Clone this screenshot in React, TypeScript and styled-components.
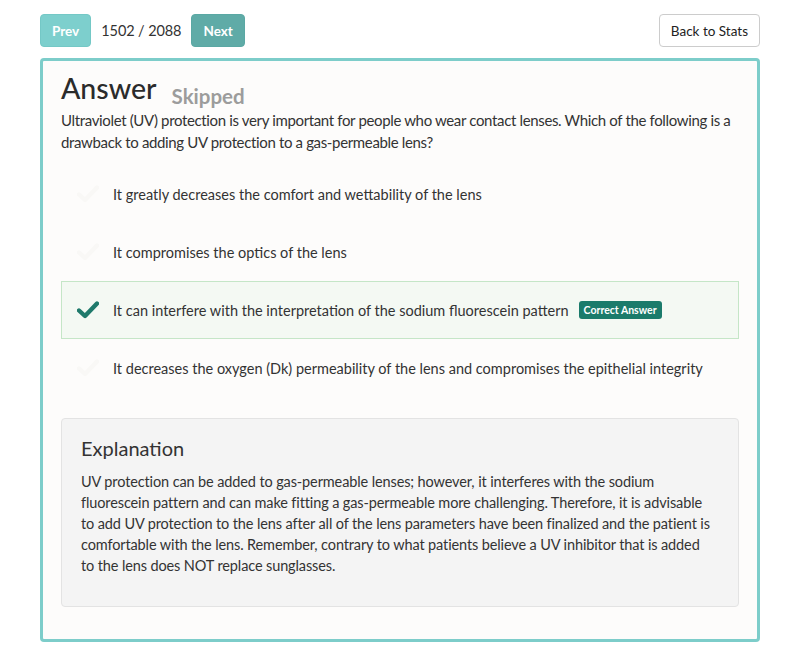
import React from "react";
import styled, { createGlobalStyle } from "styled-components";

const Global = createGlobalStyle`
  html, body { margin: 0; padding: 0; background: #ffffff; }
  body { font-family: Lato, "Open Sans", sans-serif; color: #333333; }
  * { box-sizing: border-box; }
`;

const Page = styled.div`
  width: 800px;
  padding: 14px 40px 24px 40px;
`;

const Toolbar = styled.div`
  display: flex;
  align-items: center;
  height: 33px;
`;

const NavButton = styled.button<{ $dark?: boolean }>`
  height: 33px;
  padding: 0 11px;
  border: 1px solid ${(p) => (p.$dark ? "#5aa8a4" : "#74c8c6")};
  border-radius: 4px;
  background: ${(p) => (p.$dark ? "#5fabA7" : "#7dcfcd")};
  color: #ffffff;
  font-family: Lato, sans-serif;
  font-weight: 700;
  font-size: 13.5px;
`;

const Counter = styled.span`
  margin: 0 10px;
  font-size: 14.5px;
  letter-spacing: -0.1px;
  color: #333;
`;

const Spacer = styled.div`
  flex: 1;
`;

const BackButton = styled.button`
  height: 33px;
  padding: 0 11px;
  border: 1px solid #cccccc;
  border-radius: 4px;
  background: #ffffff;
  color: #222;
  font-family: Lato, sans-serif;
  font-size: 13.5px;
`;

const Card = styled.div`
  margin-top: 11px;
  border: 3px solid #7dcdca;
  border-radius: 4px;
  background: #fdfcfb;
  padding: 8px 18px 32px 18px;
`;

const TitleRow = styled.div`
  display: flex;
  align-items: baseline;
  gap: 15px;
`;

const Title = styled.h1`
  margin: 0;
  font-size: 28.5px;
  font-weight: 500;
  color: #2b2b2b;
  line-height: 38px;
`;

const Status = styled.span`
  font-size: 20.5px;
  font-weight: 700;
  color: #9c9c9c;
  position: relative;
  top: 5px;
`;

const Question = styled.p`
  margin: 2px 0 0 0;
  font-size: 15px;
  letter-spacing: -0.35px;
  line-height: 22px;
  color: #333;
`;

const Options = styled.div`
  margin-top: 12px;
  display: flex;
  flex-direction: column;
`;

const Option = styled.div<{ $correct?: boolean }>`
  display: flex;
  align-items: center;
  height: 58px;
  padding-left: 15px;
  border: 1px solid ${(p) => (p.$correct ? "#c5e6c7" : "transparent")};
  background: ${(p) => (p.$correct ? "#f4f9f3" : "transparent")};
  font-size: 14.5px;
  color: #333;
`;

const CheckSlot = styled.span<{ $on?: boolean }>`
  width: 36px;
  display: inline-flex;
  color: ${(p) => (p.$on ? "#1f7a6b" : "#f9f8f6")};
`;

const Badge = styled.span`
  margin-left: 10px;
  padding: 3px 5px;
  border-radius: 3px;
  background: #1b7b6b;
  color: #fff;
  font-size: 10.5px;
  font-weight: 700;
  line-height: 12px;
`;

const Explanation = styled.div`
  margin-top: 21px;
  background: #f4f4f4;
  border: 1px solid #e3e3e3;
  border-radius: 4px;
  padding: 14px 23px 30px 19px;
  height: 189px;
`;

const ExTitle = styled.h3`
  margin: 0 0 8px 0;
  font-size: 20px;
  font-weight: 400;
  color: #333;
  line-height: 30px;
`;

const ExBody = styled.p`
  margin: 0;
  font-size: 14.5px;
  letter-spacing: -0.12px;
  line-height: 21px;
  color: #333;
`;

const Check = () => (
  <svg width="22" height="18" viewBox="0 0 22 18">
    <path d="M2 9.5 L8 15 L20 2.5" fill="none" stroke="currentColor" strokeWidth="4.4" strokeLinecap="round" strokeLinejoin="round" />
  </svg>
);

const options = [
  { text: "It greatly decreases the comfort and wettability of the lens" },
  { text: "It compromises the optics of the lens" },
  { text: "It can interfere with the interpretation of the sodium fluorescein pattern", correct: true },
  { text: "It decreases the oxygen (Dk) permeability of the lens and compromises the epithelial integrity" },
];

export default function App() {
  return (
    <Page>
      <Global />
      <Toolbar>
        <NavButton>Prev</NavButton>
        <Counter>1502 / 2088</Counter>
        <NavButton $dark>Next</NavButton>
        <Spacer />
        <BackButton>Back to Stats</BackButton>
      </Toolbar>
      <Card>
        <TitleRow>
          <Title>Answer</Title>
          <Status>Skipped</Status>
        </TitleRow>
        <Question>
          Ultraviolet (UV) protection is very important for people who wear contact lenses. Which of the following is a
          drawback to adding UV protection to a gas-permeable lens?
        </Question>
        <Options>
          {options.map((o) => (
            <Option key={o.text} $correct={o.correct}>
              <CheckSlot $on={o.correct}>
                <Check />
              </CheckSlot>
              <span>{o.text}</span>
              {o.correct && <Badge>Correct Answer</Badge>}
            </Option>
          ))}
        </Options>
        <Explanation>
          <ExTitle>Explanation</ExTitle>
          <ExBody>
            UV protection can be added to gas-permeable lenses; however, it interferes with the sodium fluorescein
            pattern and can make fitting a gas-permeable more challenging. Therefore, it is advisable to add UV
            protection to the lens after all of the lens parameters have been finalized and the patient is comfortable
            with the lens. Remember, contrary to what patients believe a UV inhibitor that is added to the lens does
            NOT replace sunglasses.
          </ExBody>
        </Explanation>
      </Card>
    </Page>
  );
}
